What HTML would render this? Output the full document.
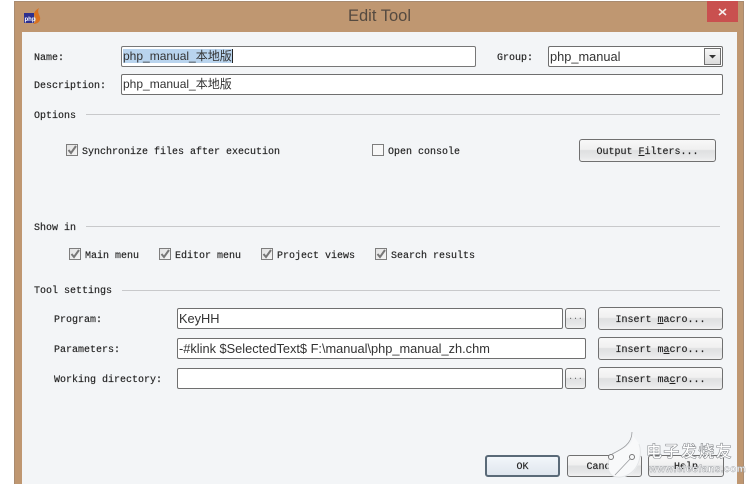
<!DOCTYPE html>
<html><head><meta charset="utf-8">
<style>
html,body{margin:0;padding:0;background:#fff}
#r{position:relative;width:751px;height:484px;overflow:hidden;background:#fff}
#r div{position:absolute;box-sizing:border-box}
.l{font:10px/12px "Liberation Mono",monospace;color:#222;white-space:pre;-webkit-text-stroke:.15px #222}
.i{background:#fff;border:1px solid #6f6f6f;border-radius:2px;font:12.8px/19px "Liberation Sans","Noto Sans CJK SC",sans-serif;color:#333;padding-left:1px;white-space:pre;overflow:hidden}
.i em{font-style:normal;font-size:12px}
.h{height:1px;background:#c8c9cb}
.b{background:linear-gradient(#f8f8f8,#f0f0f0 45%,#dfe0e1 50%,#e6e7e8 80%,#f1f1f1);border:1px solid #707070;border-radius:3px;font:10px/26px "Liberation Mono",monospace;color:#222;text-align:center;white-space:pre;-webkit-text-stroke:.15px #222}
.c{width:12px;height:12px;background:linear-gradient(135deg,#e2e2e2,#f4f4f4);border:1px solid #7d7d7d}
.c svg{position:absolute;left:0;top:0}
u{text-decoration:underline}
</style></head><body>
<div id="r">
<div style="left:14px;top:1px;width:730px;height:483px;background:#bf9771;border:1px solid #a98b70;border-bottom:0"></div>
<div style="left:22px;top:32px;width:715px;height:452px;background:#f3f5f7"></div>
<div style="left:707px;top:1px;width:31px;height:21px;background:#c9504f"></div>
<svg style="position:absolute;left:707px;top:1px" width="31" height="21"><path d="M12 8L19 14M19 8L12 14" stroke="#f6eeee" stroke-width="1.600"/></svg>
<svg style="position:absolute;left:23px;top:7px" width="18" height="18"><rect x="1" y="6" width="10" height="10" fill="#2c2f8f"/><text x="1.500" y="14" font-family="Liberation Sans" font-size="6" font-weight="bold" fill="#fff">php</text><path d="M16 1C11 4 10 7 12 10C14 12 13 15 10 17C15 17 18 14 17 10C16 7 14 5 16 1Z" fill="#d9701f"/></svg>
<div style="left:348px;top:6px;font:16.500px/20px 'Liberation Sans',sans-serif;color:#554a40;white-space:pre">Edit Tool</div>

<div class="l" style="left:34px;top:53px">Name:</div>
<div class="i" style="left:121px;top:46px;width:355px;height:21px;border-color:#777;font-size:12px"><span style="background:#b9d4ee">php_manual_<em>本地版</em></span><span style="border-left:1px solid #222"></span></div>
<div class="l" style="left:497px;top:53px">Group:</div>
<div class="i" style="left:548px;top:46px;width:175px;height:21px">php_manual</div>
<div style="left:704px;top:48px;width:17px;height:17px;background:linear-gradient(#f7f7f7,#dcdcdc);border:1px solid #6f6f6f"></div>
<svg style="position:absolute;left:704px;top:48px" width="17" height="17"><path d="M5 7H12L8.500 10.500Z" fill="#333"/></svg>
<div class="l" style="left:34px;top:81px">Description:</div>
<div class="i" style="left:121px;top:74px;width:602px;height:21px;font-size:12px">php_manual_<em>本地版</em></div>

<div class="l" style="left:34px;top:111px">Options</div>
<div class="h" style="left:86px;top:114px;width:634px"></div>
<div class="c" style="left:66px;top:144px"><svg width="10" height="10"><path d="M1.500 5L4 8L9 1" fill="none" stroke="#777" stroke-width="2"/></svg></div>
<div class="l" style="left:82px;top:147px">Synchronize files after execution</div>
<div class="c" style="left:372px;top:144px;background:#f7f7f7"></div>
<div class="l" style="left:388px;top:147px">Open console</div>
<div class="b" style="left:579px;top:139px;width:137px;height:23px">Output <u>F</u>ilters...</div>

<div class="l" style="left:34px;top:223px">Show in</div>
<div class="h" style="left:86px;top:226px;width:634px"></div>
<div class="c" style="left:69px;top:248px"><svg width="10" height="10"><path d="M1.500 5L4 8L9 1" fill="none" stroke="#777" stroke-width="2"/></svg></div>
<div class="l" style="left:85px;top:251px">Main menu</div>
<div class="c" style="left:159px;top:248px"><svg width="10" height="10"><path d="M1.500 5L4 8L9 1" fill="none" stroke="#777" stroke-width="2"/></svg></div>
<div class="l" style="left:175px;top:251px">Editor menu</div>
<div class="c" style="left:261px;top:248px"><svg width="10" height="10"><path d="M1.500 5L4 8L9 1" fill="none" stroke="#777" stroke-width="2"/></svg></div>
<div class="l" style="left:277px;top:251px">Project views</div>
<div class="c" style="left:375px;top:248px"><svg width="10" height="10"><path d="M1.500 5L4 8L9 1" fill="none" stroke="#777" stroke-width="2"/></svg></div>
<div class="l" style="left:391px;top:251px">Search results</div>

<div class="l" style="left:34px;top:286px">Tool settings</div>
<div class="h" style="left:122px;top:290px;width:598px"></div>

<div class="l" style="left:54px;top:315px">Program:</div>
<div class="i" style="left:177px;top:308px;width:386px;height:21px">KeyHH</div>
<div class="b" style="left:565px;top:308px;width:21px;height:21px;line-height:18px;font-size:8px;-webkit-text-stroke:0;color:#666">...</div>
<div class="b" style="left:598px;top:307px;width:125px;height:23px">Insert <u>m</u>acro...</div>

<div class="l" style="left:54px;top:345px">Parameters:</div>
<div class="i" style="left:177px;top:338px;width:409px;height:21px">-#klink $SelectedText$ F:\manual\php_manual_zh.chm</div>
<div class="b" style="left:598px;top:337px;width:125px;height:23px">Insert m<u>a</u>cro...</div>

<div class="l" style="left:54px;top:375px">Working directory:</div>
<div class="i" style="left:177px;top:368px;width:386px;height:21px"></div>
<div class="b" style="left:565px;top:368px;width:21px;height:21px;line-height:18px;font-size:8px;-webkit-text-stroke:0;color:#666">...</div>
<div class="b" style="left:598px;top:367px;width:125px;height:23px">Insert ma<u>c</u>ro...</div>

<div class="b" style="left:485px;top:455px;width:75px;height:22px;border:2px solid #5a6a78;line-height:22px;background:linear-gradient(#f2f6fa,#dfe6ee)">OK</div>
<div class="b" style="left:567px;top:455px;width:75px;height:22px;line-height:24px">Cancel</div>
<div class="b" style="left:648px;top:455px;width:76px;height:22px;line-height:24px">Help</div>

<svg style="position:absolute;left:595px;top:428px" width="156" height="56">
<path d="M37 4C40 14 34 18 24 23C16 27 11 36 15 44C19 51 30 52 38 44C46 36 48 24 44 16C42 12 38 9 37 4Z" fill="#f8f9fa"/>
<path d="M15 29C12 35 12 42 15 46C21 51 32 50 39 42C45 35 47 24 44 16" fill="none" stroke="#e4e6e8" stroke-width="1"/>
<path d="M17 26C25 22 37 17 37 4M36 30L20 47" fill="none" stroke="#9a9c9f" stroke-width=".8"/>
<circle cx="16" cy="29" r="2.500" fill="#f8f9fa" stroke="#777"/><circle cx="37" cy="29" r="2.500" fill="#f8f9fa" stroke="#777"/>
<text x="51" y="29" font-family="Noto Sans CJK SC,sans-serif" font-size="16" font-weight="bold" fill="#fff" stroke="#8d9094" stroke-width=".6" letter-spacing="1.400">电子发烧友</text>
<text x="54" y="44" font-family="Liberation Sans,sans-serif" font-size="10" font-weight="bold" fill="#fff" stroke="#9a9da1" stroke-width=".4" letter-spacing=".5">www.elecfans.com</text>
</svg>
</div>
</body></html>
